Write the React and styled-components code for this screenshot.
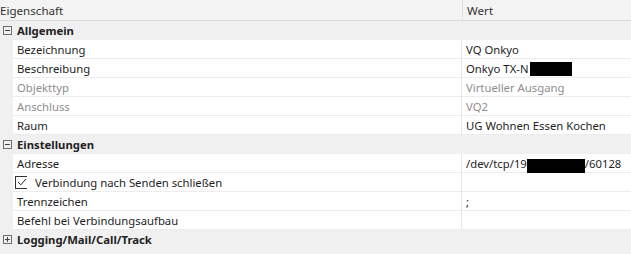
import React from "react";
import styled, { createGlobalStyle } from "styled-components";

const Global = createGlobalStyle`
  html, body {
    margin: 0;
    padding: 0;
    background: #ffffff;
  }
  body {
    font-family: "Noto Sans", "Open Sans", sans-serif;
    font-size: 11.3px;
    color: #1e1e1e;
  }
`;

const Grid = styled.div`
  width: 631px;
  height: 254px;
  overflow: hidden;
  background: #f0f0f0;
  display: flex;
  flex-direction: column;
`;

const HeaderRow = styled.div`
  display: flex;
  height: 21px;
  box-sizing: border-box;
  background: #f3f3f3;
  border-bottom: 1px solid #dcdcdc;
  align-items: center;
  color: #333;
  font-size: 11.6px;
`;

const HeaderCell = styled.div`
  width: ${(p) => p.$width || "auto"};
  flex: ${(p) => (p.$width ? "none" : 1)};
  padding-left: ${(p) => p.$pad || 0}px;
  height: 100%;
  display: flex;
  align-items: center;
  border-right: ${(p) => (p.$divider ? "1px solid #e2e2e2" : "none")};
`;

const Row = styled.div`
  display: flex;
  height: 19px;
  align-items: stretch;
`;

const Gutter = styled.div`
  width: 13px;
  flex: none;
  display: flex;
  align-items: center;
  justify-content: center;
  background: #f0f0f0;
`;

const GroupCell = styled.div`
  flex: 1;
  display: flex;
  align-items: center;
  padding-left: 4px;
  font-weight: 700;
  color: #222;
  background: #f0f0f0;
`;

const NameCell = styled.div`
  width: 449px;
  flex: none;
  display: flex;
  align-items: center;
  padding-left: 4px;
  box-sizing: border-box;
  background: #fff;
  border-bottom: 1px solid #ececec;
  border-right: 1px solid #e6e6e6;
  color: ${(p) => (p.$muted ? "#8e8e8e" : "#1e1e1e")};
`;

const ValueCell = styled.div`
  flex: 1;
  display: flex;
  align-items: center;
  padding-left: 4px;
  background: #fff;
  border-bottom: 1px solid #ececec;
  color: ${(p) => (p.$muted ? "#8e8e8e" : "#1e1e1e")};
  white-space: nowrap;
`;

const Expander = styled.span`
  width: 7px;
  height: 7px;
  border: 1px solid #6e6e6e;
  position: relative;
  margin-left: 1px;
  &::before {
    content: "";
    position: absolute;
    left: 1px;
    right: 1px;
    top: 3px;
    height: 1px;
    background: #444;
  }
  &::after {
    content: "";
    display: ${(p) => (p.$open ? "none" : "block")};
    position: absolute;
    top: 1px;
    bottom: 1px;
    left: 3px;
    width: 1px;
    background: #444;
  }
`;

const Redacted = styled.span`
  display: inline-block;
  width: ${(p) => p.$w}px;
  height: ${(p) => p.$h}px;
  background: #000;
  margin-left: ${(p) => p.$dx || 0}px;
  margin-top: ${(p) => p.$dy || 0}px;
`;

const CheckBox = styled.span`
  width: 12px;
  height: 13px;
  box-sizing: border-box;
  border-left: 1px solid #333;
  border-top: 1px solid #333;
  border-bottom: 1px solid #333;
  margin-left: -2px;
  margin-right: 8px;
  display: flex;
  align-items: center;
  justify-content: center;
`;

const Group = ({ label, open }) => (
  <Row>
    <Gutter>
      <Expander $open={open} />
    </Gutter>
    <GroupCell>{label}</GroupCell>
  </Row>
);

const Prop = ({ name, value, muted }) => (
  <Row>
    <Gutter />
    <NameCell $muted={muted}>{name}</NameCell>
    <ValueCell $muted={muted}>{value}</ValueCell>
  </Row>
);

export default function App() {
  return (
    <>
      <Global />
      <Grid>
        <HeaderRow>
          <HeaderCell $width="462px" $divider $pad={0}>Eigenschaft</HeaderCell>
          <HeaderCell $pad={4}>Wert</HeaderCell>
        </HeaderRow>
        <Group label="Allgemein" open />
        <Prop name="Bezeichnung" value="VQ Onkyo" />
        <Prop
          name="Beschreibung"
          value={
            <>
              Onkyo TX-N<Redacted $w={42} $h={14} $dx={1} $dy={2} />
            </>
          }
        />
        <Prop name="Objekttyp" value="Virtueller Ausgang" muted />
        <Prop name="Anschluss" value="VQ2" muted />
        <Prop name="Raum" value="UG Wohnen Essen Kochen" />
        <Group label="Einstellungen" open />
        <Prop
          name="Adresse"
          value={
            <>
              /dev/tcp/19<Redacted $w={58} $h={19} $dy={10} />/60128
            </>
          }
        />
        <Prop
          name={
            <>
              <CheckBox>
                <svg width="10" height="8" viewBox="0 0 10 8">
                  <path d="M1 4 L3.8 6.8 L9 1" fill="none" stroke="#222" strokeWidth="1" />
                </svg>
              </CheckBox>
              Verbindung nach Senden schließen
            </>
          }
          value=""
        />
        <Prop name="Trennzeichen" value=";" />
        <Prop name="Befehl bei Verbindungsaufbau" value="" />
        <Group label="Logging/Mail/Call/Track" />
      </Grid>
    </>
  );
}
